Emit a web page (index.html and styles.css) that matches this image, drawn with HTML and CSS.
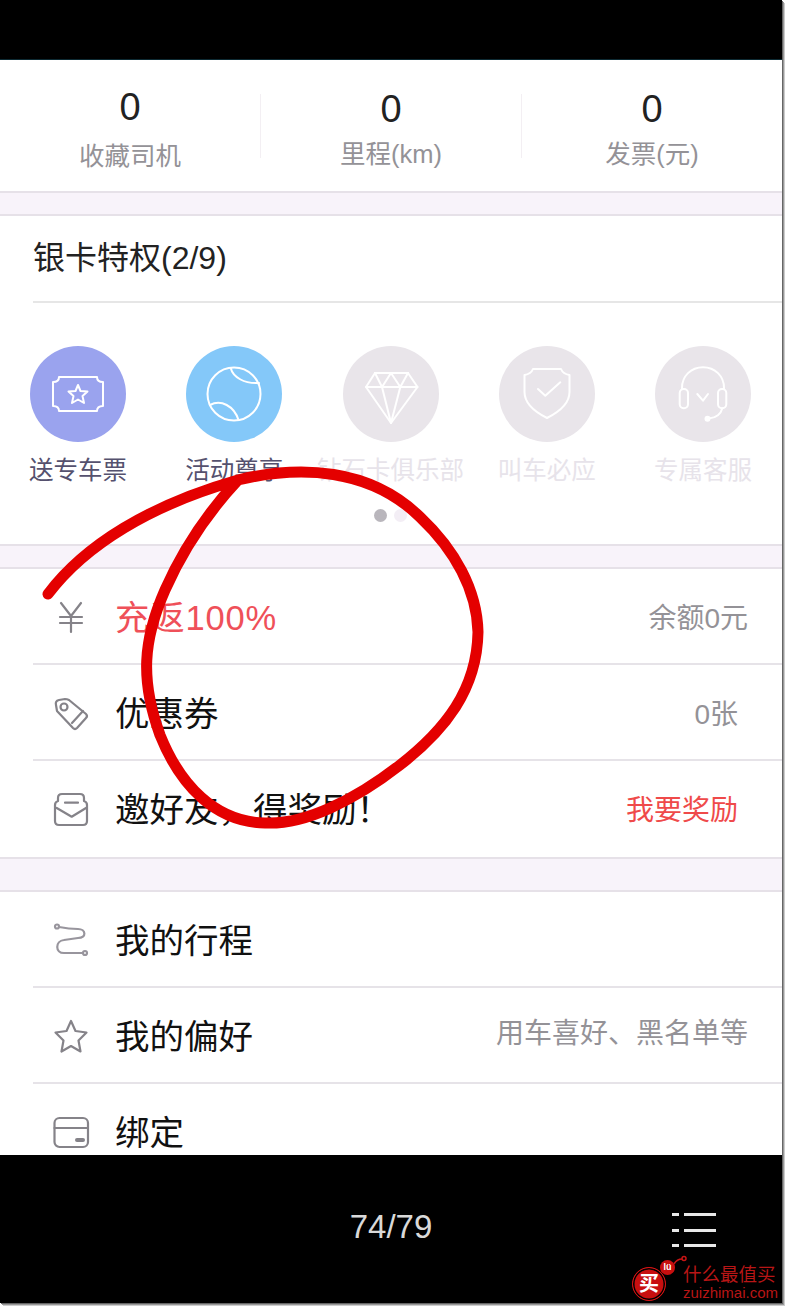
FILE: index.html
```html
<!DOCTYPE html>
<html lang="zh-CN">

<head>
  <meta charset="UTF-8">
  <meta name="viewport" content="width=device-width, initial-scale=1.0">
  <title>我的</title>
  <link rel="stylesheet" href="styles.css">
</head>

<body>
  <div class="phone">
    <div class="top-bar"></div>

    <main class="screen">
      <section class="stats">
        <div class="stat">
          <strong class="stat-num first">0</strong>
          <span class="stat-label first">收藏司机</span>
        </div>
        <div class="stat">
          <strong class="stat-num">0</strong>
          <span class="stat-label">里程(km)</span>
        </div>
        <div class="stat">
          <strong class="stat-num">0</strong>
          <span class="stat-label">发票(元)</span>
        </div>
      </section>

      <div class="gap"></div>

      <section class="privilege">
        <h2 class="privilege-title">银卡特权(2/9)</h2>
        <ul class="perks">
          <li class="perk">
            <span class="perk-icon purple">
              <svg viewBox="0 0 60 60" width="60" height="60">
                <path d="M11 13H49Q49 18 55 18V42Q49 42 49 47H11Q11 42 5 42V18Q11 18 11 13Z" />
                <path d="M30 21L32.500 27L39.500 27.500L34.500 32L36 39L30 35.500L24 39L25.500 32L20.500 27.500L27.500 27Z" />
              </svg>
            </span>
            <span class="perk-name">送专车票</span>
          </li>
          <li class="perk">
            <span class="perk-icon blue">
              <svg viewBox="0 0 60 60" width="60" height="60">
                <circle cx="30" cy="30" r="26.500" />
                <path d="M26.700 4C29 13 40 20 55 19" />
                <path d="M6 41C17 35 30 42 34.500 56" />
              </svg>
            </span>
            <span class="perk-name">活动尊享</span>
          </li>
          <li class="perk off">
            <span class="perk-icon">
              <svg viewBox="0 0 60 60" width="60" height="60">
                <path d="M14 9H47L56.500 23L30 59L5 23Z" />
                <path d="M5 23H56.500M14 9L21 23L30 9L39.300 23L47 9M21 23L30 59L39.300 23" />
              </svg>
            </span>
            <span class="perk-name">钻石卡俱乐部</span>
          </li>
          <li class="perk off">
            <span class="perk-icon">
              <svg viewBox="0 0 60 60" width="60" height="60">
                <path d="M16 5H44Q46 10 52.500 11V28C52.500 40 42 48 30 54C18 48 7.500 40 7.500 28V11Q14 10 16 5Z" />
                <path d="M21 25L28.300 31.700L43.300 18.300" />
              </svg>
            </span>
            <span class="perk-name">叫车必应</span>
          </li>
          <li class="perk off">
            <span class="perk-icon">
              <svg viewBox="0 0 60 60" width="60" height="60">
                <path d="M9 25V24C9 12 18 3.300 30 3.300S51 12 51 24V25" />
                <rect x="6.700" y="25" width="8.300" height="19.300" rx="4" />
                <rect x="45" y="25" width="8.300" height="19.300" rx="4" />
                <path d="M24.300 30L30 36.700L35 30" />
                <path d="M49.300 44.300C48 50 43 54 36.700 54.300" />
                <circle cx="34.500" cy="54.700" r="2" class="solid" />
              </svg>
            </span>
            <span class="perk-name">专属客服</span>
          </li>
        </ul>
        <div class="dots">
          <span class="dot active"></span>
          <span class="dot"></span>
        </div>
      </section>

      <div class="gap"></div>

      <ul class="menu">
        <li class="menu-row">
          <svg class="menu-icon" viewBox="0 0 34 34" width="34" height="34">
            <path d="M7 2L17 15L27 2M6 16H28M6 22H28M17 16V31" />
          </svg>
          <span class="menu-text red">充返100%</span>
          <span class="menu-note">余额0元</span>
        </li>
        <li class="menu-row">
          <svg class="menu-icon" viewBox="0 0 34 34" width="34" height="34">
            <path d="M2 8Q1 4 5 3L11 2Q13 2 15 3L32 17Q34 19 32 21L23 31Q21 33 19 31L3 14Z" />
            <circle cx="10" cy="10" r="3.500" />
            <path d="M18 26L29 14" />
          </svg>
          <span class="menu-text">优惠券</span>
          <span class="menu-note inset">0张</span>
        </li>
        <li class="menu-row">
          <svg class="menu-icon" viewBox="0 0 34 34" width="34" height="34">
            <path d="M1 12V28Q1 32 5 32H29Q33 32 33 28V12" />
            <path d="M1 12Q1 9 4 8V5Q4 1 8 1H26Q30 1 30 5V8Q33 9 33 12" />
            <path d="M2.700 15L17.700 23.700L32 15M11 9.700H24" />
          </svg>
          <span class="menu-text">邀好友，得奖励！</span>
          <span class="menu-note alert inset">我要奖励</span>
        </li>
      </ul>

      <div class="gap tall"></div>

      <ul class="menu">
        <li class="menu-row">
          <svg class="menu-icon route" viewBox="0 0 34 34" width="34" height="34">
            <path d="M5 3Q15 5 24 5C32 5 33 14 24 14L10 16C1 17 1 29 10 29H29" />
            <circle cx="3" cy="2.500" r="2" />
            <circle cx="31" cy="29" r="2" />
          </svg>
          <span class="menu-text">我的行程</span>
        </li>
        <li class="menu-row">
          <svg class="menu-icon" viewBox="0 0 34 34" width="34" height="34">
            <path d="M17 1L21.500 11L32.500 12.500L24.500 20.500L26.500 31.500L17 26L7.500 31.500L9.500 20.500L1.500 12.500L12.500 11Z" />
          </svg>
          <span class="menu-text">我的偏好</span>
          <span class="menu-note raised">用车喜好、黑名单等</span>
        </li>
        <li class="menu-row">
          <svg class="menu-icon" viewBox="0 0 34 34" width="34" height="34">
            <rect x="0.500" y="2" width="33.500" height="29" rx="5" />
            <path d="M0.500 12H34" />
            <path d="M23 24H29" class="thick" />
          </svg>
          <span class="menu-text">绑定</span>
        </li>
      </ul>
    </main>

    <footer class="bottom-bar">
      <span class="pager">74/79</span>
      <span class="list-btn">
        <span class="list-line"></span>
        <span class="list-line"></span>
        <span class="list-line"></span>
      </span>
    </footer>

    <!-- 手写的红圈，盖在页面上面 -->
    <svg class="scribble" viewBox="0 0 786 1306" width="786" height="1306">
      <path d="M48 594C85 545 150 505 238 480C300 465 370 468 420 517C455 550 477 590 478 632C477 690 445 730 400 765C355 800 305 825 265 823C215 822 180 785 160 735C140 680 143 640 165 590C185 545 210 510 238 480" />
    </svg>

    <!-- 水印 -->
    <div class="watermark">
      <span class="gourd">
        <svg class="gourd-hook" viewBox="0 0 14 10" width="14" height="10">
          <path d="M1 9Q4 4 9 4" />
          <circle cx="11" cy="3.500" r="2" />
        </svg>
        <span class="gourd-small">lü</span>
        <span class="gourd-big">买</span>
      </span>
      <span class="mark-text">
        <span class="mark-name">什么最值买</span>
        <span class="mark-url">zuizhimai.com</span>
      </span>
    </div>
  </div>
</body>

</html>
```

FILE: styles.css
```css
* {
  padding: 0;
  margin: 0;
  box-sizing: border-box;
}

html,
body {
  width: 786px;
  height: 1306px;
  overflow: hidden;
}

body {
  background: #fff;
  font-family: "Liberation Sans", "Noto Sans CJK SC", sans-serif;
}

ul {
  list-style: none;
}

.phone {
  position: relative;
  width: 782px;
  height: 1303px;
  background: #000;
  display: flex;
  flex-direction: column;
  box-shadow: 1px 1px 0 #666, 2px 2px 0 #999, 3px 3px 0 #ccc;
}

.top-bar {
  height: 60px;
  background: #000;
  border-bottom: 1px solid #0d2a33;
}

.screen {
  height: 1095px;
  overflow: hidden;
  background: #fff;
}

/* 顶部三个数字 */
.stats {
  height: 131px;
  display: flex;
  padding-top: 34px;
}

.stat {
  flex: 1;
  height: 64px;
  border-right: 1px solid #f3eff3;
  display: flex;
  flex-direction: column;
  align-items: center;
}

.stat:last-child {
  border-right: 0;
}

.stat-num {
  font-weight: normal;
  font-size: 38px;
  line-height: 38px;
  color: #222;
  margin-top: -4px;
}

.stat-num.first {
  margin-top: -6px;
}

.stat-label {
  font-size: 25.500px;
  line-height: 34px;
  color: #949297;
  margin-top: 9px;
  white-space: nowrap;
}

.stat-label.first {
  margin-top: 13px;
}

.gap {
  height: 25px;
  background: #f8f3fa;
  border-top: 2px solid #e6e1e8;
  border-bottom: 2px solid #e6e1e8;
}

.gap.tall {
  height: 35px;
}

/* 特权 */
.privilege {
  height: 328px;
}

.privilege-title {
  margin-left: 33px;
  height: 87px;
  line-height: 84px;
  font-size: 32px;
  font-weight: normal;
  color: #222;
  border-bottom: 2px solid #e6e6e6;
}

.perks {
  display: flex;
  justify-content: space-between;
  padding: 43px 21px 0 20px;
}

.perk {
  width: 116px;
  display: flex;
  flex-direction: column;
  align-items: center;
}

.perk-icon {
  width: 96px;
  height: 96px;
  border-radius: 50%;
  background: #e9e5ea;
  display: flex;
  align-items: center;
  justify-content: center;
}

.perk-icon.purple {
  background: #9aa3ee;
}

.perk-icon.blue {
  background: #84c8f9;
}

.perk-icon svg {
  fill: none;
  stroke: #fff;
  stroke-width: 2;
  stroke-linejoin: round;
  stroke-linecap: round;
}

.perk-icon .solid {
  fill: #fff;
}

.perk-name {
  margin-top: 12px;
  font-size: 24.500px;
  line-height: 34px;
  color: #55516e;
  white-space: nowrap;
}

.off .perk-name {
  color: #e7e3ea;
}

.dots {
  display: flex;
  justify-content: center;
  gap: 7px;
  margin-top: 21px;
  padding-right: 2px;
}

.dot {
  width: 13px;
  height: 13px;
  border-radius: 50%;
  background: #f3eef5;
}

.dot.active {
  background: #b9b6bc;
}

/* 列表 */
.menu-row {
  height: 96px;
  margin-left: 33px;
  padding-bottom: 2px;
  display: flex;
  align-items: center;
  border-bottom: 2px solid #e6e3e8;
}

.menu-row:last-child {
  border-bottom-color: transparent;
}

.menu-icon {
  margin-left: 21px;
  margin-top: 6px;
  flex: none;
  overflow: visible;
  fill: none;
  stroke: #858389;
  stroke-width: 2.200;
  stroke-linejoin: round;
  stroke-linecap: round;
}

.menu-icon.route {
  stroke: #98959d;
}

.menu-icon .thick {
  stroke-width: 4;
}

.menu-text {
  margin-left: 27px;
  font-size: 34.500px;
  color: #111;
  white-space: nowrap;
}

.menu-text.red {
  color: #ef5059;
  letter-spacing: 0.800px;
}

.menu-note {
  margin-left: auto;
  margin-top: 2px;
  margin-right: 34px;
  font-size: 28px;
  color: #949297;
  white-space: nowrap;
}

.menu-note.inset {
  margin-right: 44px;
}

.menu-note.alert {
  color: #ef4a4a;
}

.menu-note.raised {
  margin-bottom: 8px;
}

/* 底部 */
.bottom-bar {
  flex: 1;
  position: relative;
  display: flex;
  justify-content: center;
  padding-top: 54px;
}

.pager {
  font-size: 33px;
  line-height: 36px;
  color: #d9d9d9;
}

.list-btn {
  position: absolute;
  left: 672px;
  top: 58px;
  width: 44px;
  display: flex;
  flex-direction: column;
  gap: 12.500px;
}

.list-line {
  height: 3px;
  background: linear-gradient(to right, #e8e8e8 7px, transparent 7px, transparent 12px, #e8e8e8 12px);
}

.scribble {
  position: absolute;
  left: 0;
  top: 0;
  fill: none;
  stroke: #e40000;
  stroke-width: 11;
  stroke-linecap: round;
  stroke-linejoin: round;
  pointer-events: none;
}

.watermark {
  position: absolute;
  left: 632px;
  top: 1255px;
  display: flex;
  gap: 3px;
}

.gourd {
  position: relative;
  display: block;
  width: 48px;
  height: 48px;
}

.gourd-hook {
  position: absolute;
  left: 41px;
  top: 0;
  fill: none;
  stroke: #c81414;
  stroke-width: 1.500;
}

.gourd-big {
  position: absolute;
  left: 0;
  top: 12px;
  width: 34px;
  height: 34px;
  border-radius: 50%;
  background: #c80f0f;
  border: 1.500px solid #d61414;
  box-shadow: inset 0 0 0 1.500px #000;
  color: #fff;
  font-family: "Noto Sans CJK SC", sans-serif;
  font-size: 20px;
  font-weight: bold;
  line-height: 29px;
  text-align: center;
}

.gourd-small {
  position: absolute;
  left: 28px;
  top: 5px;
  width: 15px;
  height: 15px;
  border-radius: 50%;
  background: #c80f0f;
  color: #fff;
  font-size: 9px;
  font-weight: bold;
  line-height: 15px;
  text-align: center;
}

.mark-text {
  display: flex;
  flex-direction: column;
  color: #b81616;
  padding-top: 8px;
}

.mark-name {
  font-family: "Noto Sans CJK SC", sans-serif;
  font-size: 18.500px;
  line-height: 21px;
  white-space: nowrap;
}

.mark-url {
  font-size: 15px;
  line-height: 17px;
  white-space: nowrap;
}
```
